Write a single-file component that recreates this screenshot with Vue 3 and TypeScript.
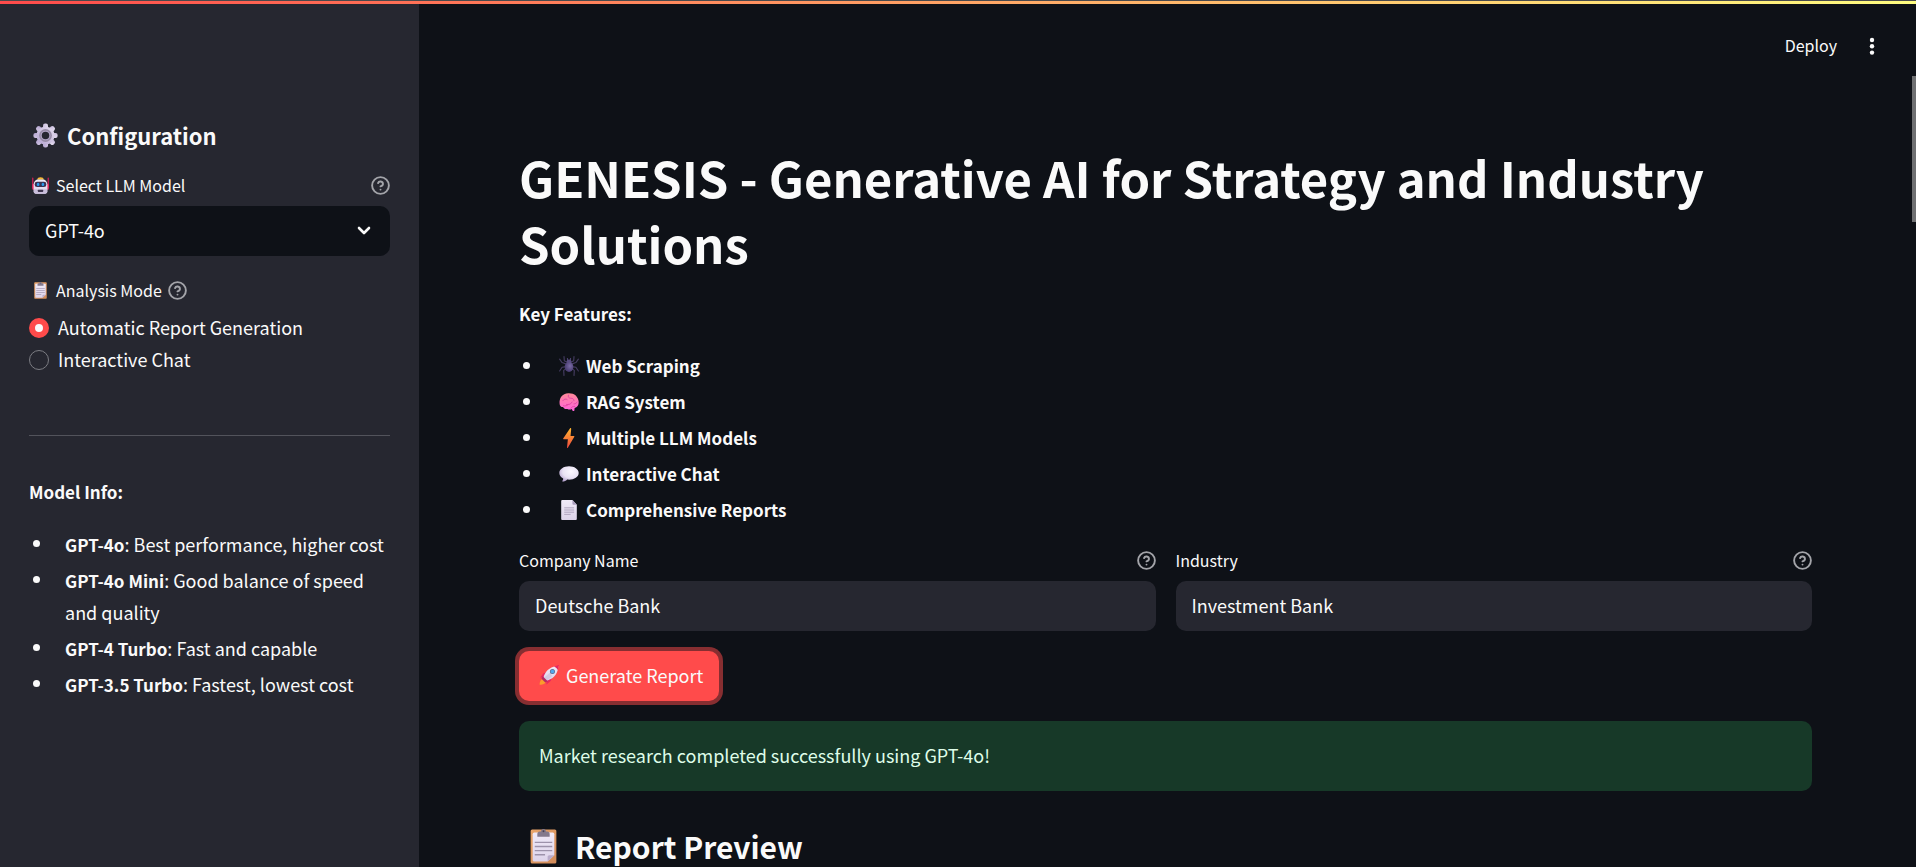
<script setup lang="ts">
import { ref } from 'vue'

interface ModelInfo {
  name: string
  note: string
}

interface Feature {
  icon: string
  label: string
}

const models: ModelInfo[] = [
  { name: 'GPT-4o', note: 'Best performance, higher cost' },
  { name: 'GPT-4o Mini', note: 'Good balance of speed and quality' },
  { name: 'GPT-4 Turbo', note: 'Fast and capable' },
  { name: 'GPT-3.5 Turbo', note: 'Fastest, lowest cost' },
]

const features: Feature[] = [
  { icon: 'spider', label: 'Web Scraping' },
  { icon: 'brain', label: 'RAG System' },
  { icon: 'bolt', label: 'Multiple LLM Models' },
  { icon: 'speech', label: 'Interactive Chat' },
  { icon: 'page', label: 'Comprehensive Reports' },
]

const modes: string[] = ['Automatic Report Generation', 'Interactive Chat']

const model = ref<string>('GPT-4o')
const mode = ref<string>(modes[0])
const company = ref<string>('Deutsche Bank')
const industry = ref<string>('Investment Bank')
</script>

<template>
  <div class="app">
    <svg class="defs" width="0" height="0" aria-hidden="true">
      <defs>
        <linearGradient id="lilac" x1="1" y1="0" x2="0" y2="1">
          <stop offset="0" stop-color="#e6def0" />
          <stop offset="1" stop-color="#b3a3cf" />
        </linearGradient>
        <linearGradient id="paper" x1="0" y1="0" x2="0" y2="1">
          <stop offset="0" stop-color="#f0eaf8" />
          <stop offset="1" stop-color="#ddd3ea" />
        </linearGradient>
        <linearGradient id="board" x1="0" y1="0" x2="1" y2="1">
          <stop offset="0" stop-color="#eaa66b" />
          <stop offset="1" stop-color="#d08a59" />
        </linearGradient>
        <linearGradient id="fire" x1="0" y1="0" x2="0" y2="1">
          <stop offset="0" stop-color="#ffb72e" />
          <stop offset="1" stop-color="#f0483f" />
        </linearGradient>
        <linearGradient id="pink" x1="0" y1="0" x2="0" y2="1">
          <stop offset="0" stop-color="#ff8a98" />
          <stop offset="1" stop-color="#ff63dc" />
        </linearGradient>
        <radialGradient id="cloud" cx="0.6" cy="0.35" r="0.7">
          <stop offset="0" stop-color="#fbf8ff" />
          <stop offset="0.6" stop-color="#e9e2f4" />
          <stop offset="1" stop-color="#b7a5d0" />
        </radialGradient>
        <radialGradient id="abdomen" cx="0.6" cy="0.4" r="0.65">
          <stop offset="0" stop-color="#7b6ca6" />
          <stop offset="1" stop-color="#43376b" />
        </radialGradient>
      </defs>
      <symbol id="help" viewBox="0 0 24 24">
        <g fill="none" stroke="currentColor" stroke-width="2.400" stroke-linecap="round" stroke-linejoin="round">
          <circle cx="12" cy="12" r="10.600" />
          <path d="M8.900 9a3.200 3.200 0 0 1 6.200 1c0 2.100-3.100 3.100-3.100 3.100" />
          <path d="M12 17.200h.01" />
        </g>
      </symbol>
      <symbol id="gear" viewBox="0 0 32 32">
        <g fill="url(#lilac)">
          <rect x="12.8" y="0.5" width="6.4" height="31" rx="2.6" />
          <rect x="12.8" y="0.5" width="6.4" height="31" rx="2.6" transform="rotate(45 16 16)" />
          <rect x="12.8" y="0.5" width="6.4" height="31" rx="2.6" transform="rotate(90 16 16)" />
          <rect x="12.8" y="0.5" width="6.4" height="31" rx="2.6" transform="rotate(135 16 16)" />
          <circle cx="16" cy="16" r="11.6" />
        </g>
        <circle cx="16" cy="16" r="8.2" fill="#968ba5" />
        <circle cx="16" cy="16" r="6.2" fill="#b3a6c8" />
        <circle cx="16" cy="16" r="4.8" fill="#262730" />
      </symbol>
      <symbol id="robot" viewBox="0 0 32 32">
        <path d="M1.500 2v18M30.500 2v18" stroke="#ee1d5c" stroke-width="2" stroke-linecap="round" />
        <rect x="0.500" y="13" width="4" height="11" rx="1.500" fill="#e82b63" />
        <rect x="27.500" y="13" width="4" height="11" rx="1.500" fill="#e82b63" />
        <path d="M10 5c0-3 2.500-4.500 6-4.500S22 2 22 5z" fill="#f5b733" />
        <path d="M3 15C3 8 7 4.500 12 4.500h8c5 0 9 3.500 9 10.500v12c0 3-2 4.500-4 4.500H7c-2 0-4-1.500-4-4.500z" fill="url(#paper)" />
        <path d="M3.500 23h25v4c0 3-2 4.500-4 4.500H7.500c-2 0-4-1.500-4-4.500z" fill="#c9bedb" />
        <rect x="5" y="9" width="22" height="10" rx="4.500" fill="#3a3152" />
        <ellipse cx="11.500" cy="14" rx="2.400" ry="3" fill="#2c9bf0" />
        <ellipse cx="20.500" cy="14" rx="2.400" ry="3" fill="#2c9bf0" />
        <rect x="11" y="24" width="10" height="4" rx="1" fill="#40364f" />
      </symbol>
      <symbol id="clipboard" viewBox="0 0 26 34">
        <rect x="0.500" y="0.500" width="25" height="33" rx="1.500" fill="url(#board)" />
        <path d="M2.500 5a1.500 1.500 0 0 1 1.500-1.500h18A1.500 1.500 0 0 1 23.500 5v20.500L17 31.500H4A1.500 1.500 0 0 1 2.500 30z" fill="url(#paper)" />
        <path d="M23.500 25.500H18.500a1.500 1.500 0 0 0-1.500 1.500v4.500z" fill="#b9abca" />
        <path d="M7 7.500V5c0-1.500 1-2.500 2.500-2.500h1C10.700 1 11.500 0 13 0s2.300 1 2.500 2.500h1C18 2.500 19 3.500 19 5v2.500z" fill="#847a8d" />
        <circle cx="13" cy="2.200" r="0.900" fill="#4a4252" />
        <path d="M4.500 13h17M4.500 17h17M4.500 21h17M4.500 25h10" stroke="#9d92ab" stroke-width="1.300" />
      </symbol>
      <symbol id="spider" viewBox="0 0 32 32">
        <g fill="none" stroke="#453c61" stroke-width="1.800" stroke-linecap="round" stroke-linejoin="round">
          <path d="M13 10 8.500 7.500 8 1M19 10l4.500-2.500L24 1" />
          <path d="M12 13 5 10.500 1 5M20 13l7-2.500L31 5" />
          <path d="M12 17 5 18 1 24M20 17l7 1 4 6" />
          <path d="M12 20 7.500 23 8 31M20 20l4.500 3-.5 8" />
        </g>
        <path d="M14 6.500 13.500 4M18 6.500l.5-2.500" stroke="#5a4d85" stroke-width="1.500" stroke-linecap="round" />
        <ellipse cx="16" cy="9" rx="4" ry="3.500" fill="#584b80" />
        <ellipse cx="16" cy="17.500" rx="7" ry="8" fill="url(#abdomen)" />
      </symbol>
      <symbol id="brain" viewBox="0 0 32 32">
        <path d="M1 19C0 10 5 2.500 15 2c9-.5 16 5 16.500 14 .3 5-2.500 8.500-6.500 9.500l-.5 4.500c-2 1-3.500-.5-4-3-2 1.500-5 1.500-7 0-3 1-6-.5-7-3C3 24 1.300 22 1 19z" fill="url(#pink)" />
        <g fill="none" stroke="#e246a4" stroke-width="1.500" stroke-linecap="round">
          <path d="M6 14c2-3 5-3.500 7-2M15 5c-1 3 1 5 4 5s5 1 5 4M12 20c4 1 8-1 9-4M24 19c2 0 4-1 5-3M7 22c3 1 6 0 8-2M19 26c1-2 3-3 6-3" />
        </g>
      </symbol>
      <symbol id="bolt" viewBox="0 0 32 32">
        <path d="M17.500 0.800 6.700 16.800c-.4.700 0 1.300.7 1.300h6.800L12.800 31c-.1 1 .8 1.200 1.300.5L24.500 14c.4-.7 0-1.300-.7-1.300H18.500L19.500 1.500c.1-1.200-1.300-1.900-2-.7z" fill="url(#fire)" />
      </symbol>
      <symbol id="speech" viewBox="0 0 32 32">
        <path d="M16 3.500C24.500 3.500 31.500 8 31.500 14.300S24.500 25 16 25c-1 0-2 0-3-.2C11 27 8.500 28 6 28c-.8 0-1-.8-.5-1.300 1-1.200 1.300-2.200 1.200-3.600C3.200 21 .5 18 .5 14.300.5 8 7.500 3.500 16 3.500z" fill="url(#cloud)" />
      </symbol>
      <symbol id="page" viewBox="0 0 32 32">
        <path d="M3.500 1.500A1.500 1.500 0 0 1 5 0h16.500L28.500 7.500v23A1.500 1.500 0 0 1 27 32H5a1.500 1.500 0 0 1-1.500-1.500z" fill="url(#paper)" />
        <path d="M21.500 0 28.500 7.500H23A1.500 1.500 0 0 1 21.500 6z" fill="#aa9dbd" />
        <path d="M9 12.500h14.500M9 16h14.500M9 19.500h14.500M9 23h9" stroke="#a99db8" stroke-width="1.400" stroke-linecap="round" />
      </symbol>
      <symbol id="rocket" viewBox="0 0 32 32">
        <path d="M8 22c-4 0-7 3-7 9.500C7 31.500 11 29 11 25z" fill="#fb9b2c" />
        <path d="M14 11 7 13 2 20l8 0zM21 18l-2 7-7 6 0-8z" fill="#e8275f" />
        <path d="M7 21C9 11 17 3 27 2l4-.5L30.500 5C29 16 21 23 11 25.500z" fill="url(#paper)" />
        <path d="M7 21 18 12 21 18 11 25.500z" fill="#c9bedb" opacity="0.600" />
        <path d="M24 2.500 32 0l-1.800 8C29 6 27 4 24 2.500z" fill="#e8275f" />
        <path d="M6 18 4 22l6 6 4-2z" fill="#b72a62" />
        <circle cx="21.500" cy="10.500" r="4" fill="#5a6a94" />
        <circle cx="21.500" cy="10.500" r="2.800" fill="#52a9ef" />
      </symbol>
    </svg>

    <div class="accent" aria-hidden="true"></div>

    <aside class="sidebar">
      <h2 class="side-title">
        <svg class="ico-gear" aria-hidden="true"><use href="#gear" /></svg>
        Configuration
      </h2>

      <div class="label-row">
        <label class="label" for="model">
          <svg class="ico-small" aria-hidden="true"><use href="#robot" /></svg>
          Select LLM Model
        </label>
        <button class="help" type="button" aria-label="About the LLM model">
          <svg aria-hidden="true"><use href="#help" /></svg>
        </button>
      </div>
      <div class="select">
        <select id="model" v-model="model">
          <option v-for="m in models" :key="m.name">{{ m.name }}</option>
        </select>
        <svg class="chevron" viewBox="0 0 14 10" aria-hidden="true">
          <path d="M2 2l5 5 5-5" fill="none" stroke="currentColor" stroke-width="2.600" stroke-linecap="round" stroke-linejoin="round" />
        </svg>
      </div>

      <fieldset class="modes" aria-labelledby="mode-label">
        <div class="mode-label">
          <span id="mode-label" class="label">
            <svg class="ico-small" aria-hidden="true"><use href="#clipboard" /></svg>
            Analysis Mode
          </span>
          <button class="help" type="button" aria-label="About the analysis mode">
            <svg aria-hidden="true"><use href="#help" /></svg>
          </button>
        </div>
        <label v-for="m in modes" :key="m" class="radio">
          <input v-model="mode" type="radio" name="mode" :value="m" />
          <span class="radio-text">{{ m }}</span>
        </label>
      </fieldset>

      <hr class="rule" />

      <p class="strong">Model Info:</p>
      <ul class="list">
        <li v-for="m in models" :key="m.name">
          <span><strong class="name">{{ m.name }}</strong>: {{ m.note }}</span>
        </li>
      </ul>
    </aside>

    <main class="main">
      <header class="toolbar">
        <button class="deploy" type="button">Deploy</button>
        <button class="menu" type="button" aria-label="Main menu">
          <svg viewBox="0 0 6 18" aria-hidden="true">
            <circle cx="3" cy="3" r="2.200" />
            <circle cx="3" cy="9.300" r="2.200" />
            <circle cx="3" cy="15.600" r="2.200" />
          </svg>
        </button>
      </header>

      <div class="content">
        <h1 class="title">GENESIS - Generative AI for Strategy and Industry Solutions</h1>
        <p class="strong">Key Features:</p>
        <ul class="list">
          <li v-for="f in features" :key="f.label">
            <strong class="feature">
              <svg class="ico-feature" aria-hidden="true"><use :href="'#' + f.icon" /></svg>
              {{ f.label }}
            </strong>
          </li>
        </ul>

        <div class="fields">
          <div class="field">
            <div class="label-row">
              <label class="label" for="company">Company Name</label>
              <button class="help" type="button" aria-label="About the company name">
                <svg aria-hidden="true"><use href="#help" /></svg>
              </button>
            </div>
            <input id="company" v-model="company" class="text" type="text" />
          </div>
          <div class="field">
            <div class="label-row">
              <label class="label" for="industry">Industry</label>
              <button class="help" type="button" aria-label="About the industry">
                <svg aria-hidden="true"><use href="#help" /></svg>
              </button>
            </div>
            <input id="industry" v-model="industry" class="text" type="text" />
          </div>
        </div>

        <button class="generate" type="button">
          <svg class="ico-feature" aria-hidden="true"><use href="#rocket" /></svg>
          Generate Report
        </button>

        <div class="alert" role="status">Market research completed successfully using GPT-4o!</div>

        <h2 class="preview">
          <svg class="ico-clip" aria-hidden="true"><use href="#clipboard" /></svg>
          Report Preview
        </h2>
      </div>
    </main>
    <div class="thumb" aria-hidden="true"></div>
  </div>
</template>

<style>
body {
  margin: 0;
  background: #0e1117;
}
</style>

<style scoped>
.app {
  display: flex;
  position: relative;
  height: 100vh;
  overflow: hidden;
  background: #0e1117;
  color: #fafafa;
  font-family: "Noto Sans CJK SC", "Noto Sans", sans-serif;
  font-size: 18px;
  line-height: 32px;
}

.app *,
.app *::before {
  box-sizing: border-box;
}

.defs {
  position: absolute;
}

.accent {
  position: absolute;
  top: 0;
  left: 0;
  right: 0;
  height: 4px;
  border-top: 1px solid #4a4a4c;
  background: linear-gradient(90deg, #ff4b4b, #fffd80);
  z-index: 2;
}

button,
input,
select {
  font: inherit;
  color: inherit;
}

button {
  padding: 0;
  border: 0;
  background: none;
  cursor: pointer;
}

h1,
h2,
p,
ul,
fieldset {
  margin: 0;
  padding: 0;
  border: 0;
}

strong {
  font-size: 17px;
}

.name {
  line-height: 1;
}

.sidebar {
  flex: 0 0 419px;
  padding: 119px 29px 0;
  background: #262730;
  overflow: hidden;
}

.side-title {
  display: flex;
  align-items: center;
  gap: 9px;
  padding-left: 4px;
  margin-bottom: 22px;
  font-size: 22px;
  line-height: 32px;
}

.ico-gear {
  width: 25px;
  height: 25px;
}

.label-row {
  display: flex;
  align-items: center;
  justify-content: space-between;
  height: 24px;
  margin-bottom: 9px;
}

.label {
  display: flex;
  align-items: center;
  font-size: 16px;
  line-height: 24px;
}

.ico-small {
  width: 17px;
  height: 17px;
  margin: 0 7px 0 3px;
}

.help {
  display: flex;
  color: #a3a4a9;
}

.help svg {
  width: 19px;
  height: 19px;
}

.select {
  position: relative;
  margin-bottom: 22px;
}

.select select {
  appearance: none;
  display: block;
  width: 100%;
  height: 50px;
  padding: 0 48px 2px 16px;
  border: 0;
  border-radius: 10px;
  background: #0e1117;
}

.chevron {
  position: absolute;
  top: 20px;
  right: 19px;
  width: 14px;
  height: 10px;
  pointer-events: none;
}

.modes {
  min-width: 0;
}

.mode-label {
  display: flex;
  align-items: center;
  gap: 6px;
  margin-bottom: 10px;
}

.radio {
  display: flex;
  align-items: center;
  gap: 9px;
  height: 32px;
}

.radio-text {
  padding-bottom: 2px;
}

.radio input {
  appearance: none;
  width: 20px;
  height: 20px;
  margin: 0;
  border: 1px solid #7c7d83;
  border-radius: 50%;
}

.radio input:checked {
  border: 6px solid #ff4b4b;
  background: #fafafa;
}

.rule {
  margin: 59px 0 40px;
  border: 0;
  border-top: 1px solid #52535b;
}

.strong {
  margin-bottom: 20px;
  font-size: 17px;
  font-weight: 700;
}

.list {
  display: flex;
  flex-direction: column;
  gap: 4px;
  list-style: none;
}

.list li {
  display: flex;
}

.list li::before {
  content: "";
  flex: none;
  width: 7px;
  height: 7px;
  margin: 12px 25px 0 4px;
  border-radius: 50%;
  background: #fafafa;
}

.main {
  flex: 1;
  min-width: 0;
  overflow: hidden;
}

.toolbar {
  display: flex;
  align-items: center;
  justify-content: flex-end;
  gap: 32px;
  height: 92px;
  padding-right: 41px;
}

.deploy {
  padding-bottom: 2px;
  font-size: 16px;
  line-height: 24px;
}

.menu svg {
  display: block;
  width: 6px;
  height: 18px;
  fill: currentColor;
}

.content {
  padding: 52px 104px 0 100px;
}

.title {
  margin-bottom: 22px;
  font-size: 49px;
  line-height: 66px;
}

.feature {
  display: flex;
  align-items: center;
  padding-left: 4px;
}

.ico-feature {
  width: 20px;
  height: 20px;
  margin-right: 7px;
}

.fields {
  display: grid;
  grid-template-columns: 1fr 1fr;
  gap: 20px;
  margin: 22px 0 20px;
}

.text {
  display: block;
  width: 100%;
  height: 50px;
  padding: 0 16px 2px;
  border: 0;
  border-radius: 10px;
  background: #262730;
  outline: none;
}

.generate {
  display: flex;
  align-items: center;
  height: 50px;
  padding: 0 16px 2px 20px;
  border-radius: 10px;
  background: #ff4b4b;
  box-shadow: 0 0 0 4px rgba(255, 75, 75, 0.5);
}

.alert {
  margin: 20px 0 34px;
  padding: 18px 20px 20px;
  border-radius: 10px;
  background: #173928;
  color: #dffde9;
}

.preview {
  display: flex;
  align-items: center;
  gap: 18px;
  padding-left: 11px;
  font-size: 30px;
  line-height: 42px;
}

.ico-clip {
  width: 27px;
  height: 35px;
}

.thumb {
  position: absolute;
  top: 76px;
  right: 0;
  width: 4px;
  height: 146px;
  background: #6f7072;
}
</style>
